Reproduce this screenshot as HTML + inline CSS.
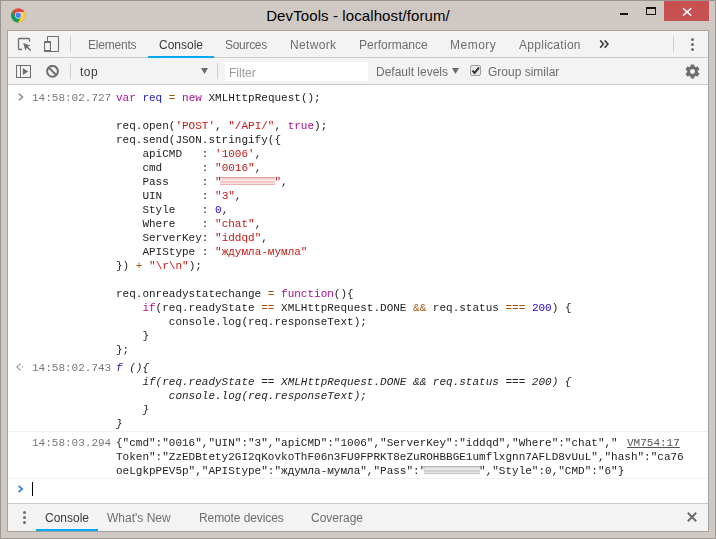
<!DOCTYPE html>
<html><head><meta charset="utf-8">
<style>
*{margin:0;padding:0;box-sizing:border-box}
html,body{width:716px;height:539px;overflow:hidden}
body{position:relative;background:#cfc8c3;font-family:"Liberation Sans",sans-serif;}
.abs{position:absolute}
#frame{position:absolute;left:0;top:0;width:716px;height:539px;border:1px solid #99948f}
#title{position:absolute;left:0;top:6px;width:716px;text-align:center;font-size:15px;color:#000;line-height:20px;letter-spacing:0.1px}
#content{position:absolute;left:7px;top:30px;width:702px;height:502px;border:1px solid #a9a39f;background:#fff;overflow:hidden}
.tb{position:absolute;left:0;width:700px;height:27px;background:#f3f3f3;border-bottom:1px solid #cccccc}
.ui{will-change:transform;position:absolute;font-size:12px;color:#3a3a3a;white-space:nowrap;line-height:14px}
.g{color:#6e6e6e}
.sep{position:absolute;width:1px;background:#cfcfcf}
.mono{will-change:transform;margin-top:1px;font-family:"Liberation Mono",monospace;font-size:11px;line-height:14px;white-space:pre;position:absolute;color:#222}
.ts{color:#777}
.k{color:#aa0d91}
.d{color:#1c1cb0}
.o{color:#a5520b}
.s{color:#c41a16}
.n{color:#1c00cf}
.it{font-style:italic}
</style></head><body>
<div id="frame"></div>
<!-- chrome logo -->
<svg class="abs" style="left:10px;top:7px" width="16" height="16" viewBox="0 0 16 16">
  <circle cx="8.3" cy="8.3" r="7.1" fill="#dc4a3c"/>
  <path d="M2.27 4.55 A7.1 7.1 0 0 0 8.07 15.40 L11.20 9.98 L8.3 8.3 L5.40 9.98 Z" fill="#0f9d58"/>
  <path d="M8.07 15.40 A7.1 7.1 0 0 0 14.56 4.95 L8.30 4.95 L8.3 8.3 L11.20 9.98 Z" fill="#ffcd40"/>
  <circle cx="8.3" cy="8.3" r="3.35" fill="#f1f1f1"/>
  <circle cx="8.3" cy="8.3" r="2.7" fill="#4285f4"/>
</svg>
<div id="title">DevTools - localhost/forum/</div>
<!-- window controls -->
<div class="abs" style="left:620px;top:13px;width:8px;height:2px;background:#111"></div>
<div class="abs" style="left:646px;top:7px;width:10px;height:8px;border:1px solid #111;border-top-width:2px"></div>
<div class="abs" style="left:664px;top:1px;width:45px;height:20px;background:#c75050"></div>
<svg class="abs" style="left:682px;top:7px" width="10" height="10" viewBox="0 0 10 10"><path d="M1 1.2 L9.2 8.6 M9.2 1.2 L1 8.6" stroke="#fff" stroke-width="1.5"/></svg>

<div id="content">
  <!-- toolbar 1 -->
  <div class="tb" style="top:0"></div>
  <!-- inspect icon -->
  <svg class="abs" style="left:8px;top:5px" width="18" height="18" viewBox="0 0 18 18">
    <path d="M6 13.5 H3.5 Q2.5 13.5 2.5 12.5 V3.5 Q2.5 2.5 3.5 2.5 H12.5 Q13.5 2.5 13.5 3.5 V5.8" fill="none" stroke="#6e6e6e" stroke-width="1.3"/>
    <path d="M7.2 7 L14.5 9.4 L11.6 10.8 L9.3 14.5 Z" fill="#6e6e6e"/>
    <path d="M11 10.8 L14.6 14.5" stroke="#6e6e6e" stroke-width="1.6"/>
  </svg>
  <!-- device icon -->
  <svg class="abs" style="left:34px;top:3px" width="20" height="20" viewBox="0 0 20 20">
    <path d="M5.5 7 V3 Q5.5 2.5 6 2.5 H16 Q16.5 2.5 16.5 3 V17 Q16.5 17.5 16 17.5 H9" fill="none" stroke="#6e6e6e" stroke-width="1.1"/>
    <path fill-rule="evenodd" fill="#6e6e6e" d="M2 7.5 Q2 7 2.5 7 H8.5 Q9 7 9 7.5 V17.5 Q9 18 8.5 18 H2.5 Q2 18 2 17.5 Z M3.1 8.9 V16 H7.9 V8.9 Z"/>
  </svg>
  <div class="sep" style="left:62px;top:5px;height:16px"></div>
  <div class="ui g" style="left:80px;top:7px;letter-spacing:-0.2px">Elements</div>
  <div class="ui" style="left:151px;top:7px">Console</div>
  <div class="abs" style="left:140px;top:25px;width:66px;height:2px;background:#03a9f4"></div>
  <div class="ui g" style="left:217px;top:7px;letter-spacing:-0.3px">Sources</div>
  <div class="ui g" style="left:282px;top:7px;letter-spacing:0.35px">Network</div>
  <div class="ui g" style="left:351px;top:7px">Performance</div>
  <div class="ui g" style="left:442px;top:7px;letter-spacing:0.5px">Memory</div>
  <div class="ui g" style="left:511px;top:7px;letter-spacing:0.28px">Application</div>
  <svg class="abs" style="left:591px;top:9px" width="10" height="9" viewBox="0 0 10 9"><path d="M1.2 0.4 L4.4 4.1 L1.2 7.8 M5.7 0.4 L8.9 4.1 L5.7 7.8" fill="none" stroke="#3a3a3a" stroke-width="1.6"/></svg>
  <div class="sep" style="left:665px;top:5px;height:16px"></div>
  <div class="abs" style="left:683px;top:7px;width:3px;height:3px;border-radius:50%;background:#6e6e6e"></div>
  <div class="abs" style="left:683px;top:12px;width:3px;height:3px;border-radius:50%;background:#6e6e6e"></div>
  <div class="abs" style="left:683px;top:17px;width:3px;height:3px;border-radius:50%;background:#6e6e6e"></div>

  <!-- toolbar 2 -->
  <div class="tb" style="top:27px"></div>
  <svg class="abs" style="left:8px;top:34px" width="16" height="14" viewBox="0 0 16 14">
    <rect x="0.5" y="0.5" width="14" height="12" fill="none" stroke="#6e6e6e"/>
    <path d="M4.5 0.5 V12.5" stroke="#6e6e6e"/>
    <path d="M6.9 3.1 L12.1 6.5 L6.9 10 Z" fill="#6e6e6e"/>
  </svg>
  <svg class="abs" style="left:38px;top:34px" width="14" height="14" viewBox="0 0 14 14">
    <circle cx="6.5" cy="6.3" r="5.4" fill="none" stroke="#6e6e6e" stroke-width="2"/>
    <path d="M2.8 2.6 L10.2 10" stroke="#6e6e6e" stroke-width="2"/>
  </svg>
  <div class="sep" style="left:62px;top:32px;height:16px"></div>
  <div class="ui" style="left:72px;top:34px;letter-spacing:0.5px">top</div>
  <svg class="abs" style="left:193px;top:37px" width="7" height="6" viewBox="0 0 7 6"><path d="M0 0 H7 L3.5 6 Z" fill="#6a6a6a"/></svg>
  <div class="sep" style="left:209px;top:32px;height:16px"></div>
  <div class="abs" style="left:217px;top:31px;width:143px;height:19px;background:#fff"></div>
  <div class="ui" style="left:221px;top:35px;color:#9a9a9a">Filter</div>
  <div class="ui g" style="left:368px;top:34px">Default levels</div>
  <svg class="abs" style="left:444px;top:37px" width="7" height="6" viewBox="0 0 7 6"><path d="M0 0 H7 L3.5 6 Z" fill="#6a6a6a"/></svg>
  <div class="abs" style="left:462px;top:34px;width:11px;height:11px;border:1px solid #a0a0a0;border-radius:2px;background:#e9e9e9"></div>
  <svg class="abs" style="left:462px;top:34px" width="11" height="11" viewBox="0 0 11 11"><path d="M2.4 5.6 L4.6 7.9 L8.9 2.6" fill="none" stroke="#333" stroke-width="2"/></svg>
  <div class="ui g" style="left:480px;top:34px">Group similar</div>
  <svg class="abs" style="left:676px;top:32px" width="17" height="17" viewBox="0 0 24 24"><path fill="#6e6e6e" d="M19.43 12.98c.04-.32.07-.64.07-.98s-.03-.66-.07-.98l2.11-1.65c.19-.15.24-.42.12-.64l-2-3.46c-.12-.22-.39-.3-.61-.22l-2.49 1c-.52-.4-1.08-.73-1.69-.98l-.38-2.65C14.46 2.18 14.25 2 14 2h-4c-.25 0-.46.18-.49.42l-.38 2.65c-.61.25-1.17.59-1.69.98l-2.49-1c-.23-.09-.49 0-.61.22l-2 3.46c-.13.22-.07.49.12.64l2.11 1.65c-.04.32-.07.65-.07.98s.03.66.07.98l-2.11 1.650c-.19.15-.24.42-.12.64l2 3.46c.12.22.39.3.61.22l2.49-1c.52.4 1.08.73 1.690.98l.38 2.65c.03.24.24.42.49.42h4c.25 0 .46-.18.49-.42l.38-2.65c.61-.25 1.17-.59 1.69-.98l2.49 1c.23.09.49 0 .61-.22l2-3.46c.12-.22.07-.49-.12-.64l-2.11-1.65zM12 15.5c-1.93 0-3.5-1.57-3.5-3.5s1.57-3.5 3.5-3.5 3.5 1.57 3.5 3.5-1.57 3.5-3.5 3.5z"/></svg>


  <!-- console messages -->
  <svg class="abs" style="left:10px;top:62px" width="6" height="8" viewBox="0 0 6 8"><path d="M0.8 0.8 L4.6 4 L0.8 7.2" fill="none" stroke="#808080" stroke-width="1.3"/></svg>
  <div class="mono ts" style="left:24px;top:59px">14:58:02.727</div>
  <div class="mono" style="left:108px;top:59px"><span class="k">var</span> <span class="d">req</span> <span class="o">=</span> <span class="k">new</span> XMLHttpRequest();

req.open(<span class="s">'POST'</span>, <span class="s">"/API/"</span>, <span class="k">true</span>);
req.send(JSON.stringify({
    apiCMD   : <span class="s">'1006'</span>,
    cmd      : <span class="s">"0016"</span>,
    Pass     : <span class="s">"        "</span>,
    UIN      : <span class="s">"3"</span>,
    Style    : <span class="n">0</span>,
    Where    : <span class="s">"chat"</span>,
    ServerKey: <span class="s">"iddqd"</span>,
    APIStype : <span class="s">"ждумла-мумла"</span>
}) <span class="o">+</span> <span class="s">"\r\n"</span>);

req.onreadystatechange <span class="o">=</span> <span class="k">function</span>(){
    <span class="k">if</span>(req.readyState <span class="o">==</span> XMLHttpRequest.DONE <span class="o">&amp;&amp;</span> req.status <span class="o">===</span> <span class="n">200</span>) {
        console.log(req.responseText);
    }
};</div>
  <div class="abs" style="left:212px;top:146px;width:55px;height:8px;background:linear-gradient(#e77a7a 0,#f4c4c4 18%,#fdeeee 40%,#f1b3b3 62%,#fbe6e6 80%,#e88a8a 100%);opacity:.9"></div>

  <svg class="abs" style="left:8px;top:332px" width="8" height="8" viewBox="0 0 8 8"><path d="M4.6 0.8 L0.8 4 L4.6 7.2" fill="none" stroke="#a0a0a0" stroke-width="1.2"/><circle cx="6.5" cy="4" r="0.8" fill="#a0a0a0"/></svg>
  <div class="mono ts" style="left:24px;top:329px">14:58:02.743</div>
  <div class="mono it" style="left:108px;top:329px"><span class="d">f</span> (){
    if(req.readyState == XMLHttpRequest.DONE &amp;&amp; req.status === 200) {
        console.log(req.responseText);
    }
}</div>
  <div class="abs" style="left:0;top:400px;width:700px;height:1px;background:#f0f0f0"></div>

  <div class="mono ts" style="left:24px;top:404px">14:58:03.294</div>
  <div class="mono" style="left:108px;top:404px">{"cmd":"0016","UIN":"3","apiCMD":"1006","ServerKey":"iddqd","Where":"chat","
Token":"ZzEDBtety2GI2qKovkoThF06n3FU9FPRKT8eZuROHBBGE1umflxgnn7AFLD8vUuL","hash":"ca76
oeLgkpPEV5p","APIStype":"ждумла-мумла","Pass":"        ","Style":0,"CMD":"6"}</div>
  <div class="mono" style="left:619px;top:404px;color:#555;text-decoration:underline">VM754:17</div>
  <div class="abs" style="left:416px;top:435px;width:56px;height:8px;background:linear-gradient(#a0a0a0 0,#d2d2d2 18%,#efefef 40%,#bdbdbd 62%,#e8e8e8 80%,#a6a6a6 100%);opacity:.9"></div>
  <div class="abs" style="left:0;top:447px;width:700px;height:1px;background:#f0f0f0"></div>

  <!-- prompt -->
  <svg class="abs" style="left:10px;top:454px" width="6" height="8" viewBox="0 0 6 8"><path d="M0.6 0.8 L4.2 4 L0.6 7.2" fill="none" stroke="#367cf1" stroke-width="1.7"/></svg>
  <div class="abs" style="left:24px;top:451px;width:1px;height:14px;background:#000"></div>

  <!-- drawer -->
  <div class="tb" style="top:472px;height:28px;border-bottom:0;border-top:1px solid #cccccc"></div>
  <div class="abs" style="left:15px;top:480px;width:3px;height:3px;border-radius:50%;background:#6e6e6e"></div>
  <div class="abs" style="left:15px;top:485px;width:3px;height:3px;border-radius:50%;background:#6e6e6e"></div>
  <div class="abs" style="left:15px;top:490px;width:3px;height:3px;border-radius:50%;background:#6e6e6e"></div>
  <div class="ui" style="left:37px;top:480px">Console</div>
  <div class="abs" style="left:28px;top:498px;width:62px;height:2px;background:#03a9f4"></div>
  <div class="ui g" style="left:99px;top:480px">What's New</div>
  <div class="ui g" style="left:191px;top:480px;letter-spacing:-0.1px">Remote devices</div>
  <div class="ui g" style="left:303px;top:480px">Coverage</div>
  <svg class="abs" style="left:679px;top:481px" width="10" height="10" viewBox="0 0 10 10"><path d="M0.8 0.8 L9.2 9.2 M9.2 0.8 L0.8 9.2" stroke="#6e6e6e" stroke-width="2"/></svg>
</div>
</body></html>
